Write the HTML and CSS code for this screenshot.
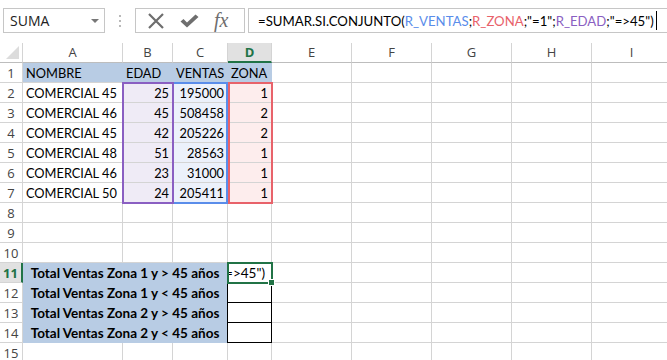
FILE: index.html
```html
<!DOCTYPE html>
<html lang="es">
<head>
    <meta charset="UTF-8">
    <title>Hoja de cálculo</title>
    <link rel="stylesheet" href="styles.css">
</head>
<body>
    <div class="formula-bar">
        <div class="name-box"><span>SUMA</span><span class="caret"></span></div>
        <div class="grip">
            <svg width="4" height="12" viewBox="0 0 4 12"><rect x="1" y="0" width="2" height="2" fill="#b9b9b9"/><rect x="1" y="5" width="2" height="2" fill="#b9b9b9"/><rect x="1" y="10" width="2" height="2" fill="#b9b9b9"/></svg>
        </div>
        <div class="fx-buttons">
            <svg class="icon-cancel" width="18" height="16" viewBox="0 0 18 16"><path d="M2 1 L16 15 M16 1 L2 15" stroke="#6e6e6e" stroke-width="2.2" fill="none"/></svg>
            <svg class="icon-enter" width="19" height="14" viewBox="0 0 19 14"><path d="M0.5 7.5 L3.5 5 L7 8.5 L15.5 0.5 L18.5 3 L7 13.5 Z" fill="#6e6e6e"/></svg>
            <span class="fx">fx</span>
        </div>
        <div class="formula-input"><span>=SUMAR.SI.CONJUNTO(<span class="ref-ventas">R_VENTAS</span>;<span class="ref-zona">R_ZONA</span>;"=1";<span class="ref-edad">R_EDAD</span>;"=&gt;45")</span><span class="cursor"></span></div>
    </div>

    <div class="sheet">
        <!-- column headers -->
        <div class="corner"><span class="tri"></span></div>
        <div class="ch">A</div>
        <div class="ch">B</div>
        <div class="ch">C</div>
        <div class="ch sel">D</div>
        <div class="ch">E</div>
        <div class="ch">F</div>
        <div class="ch">G</div>
        <div class="ch">H</div>
        <div class="ch">I</div>

        <!-- data -->
        <div class="rh">1</div>
        <div class="c hd">NOMBRE</div><div class="c hd">EDAD</div><div class="c hd">VENTAS</div><div class="c hd">ZONA</div><div class="rest"></div>

        <div class="rh">2</div>
        <div class="c">COMERCIAL 45</div><div class="c num rb">25</div><div class="c num rc">195000</div><div class="c num rd">1</div><div class="rest"></div>
        <div class="rh">3</div>
        <div class="c">COMERCIAL 46</div><div class="c num rb">45</div><div class="c num rc">508458</div><div class="c num rd">2</div><div class="rest"></div>
        <div class="rh">4</div>
        <div class="c">COMERCIAL 45</div><div class="c num rb">42</div><div class="c num rc">205226</div><div class="c num rd">2</div><div class="rest"></div>
        <div class="rh">5</div>
        <div class="c">COMERCIAL 48</div><div class="c num rb">51</div><div class="c num rc">28563</div><div class="c num rd">1</div><div class="rest"></div>
        <div class="rh">6</div>
        <div class="c">COMERCIAL 46</div><div class="c num rb">23</div><div class="c num rc">31000</div><div class="c num rd">1</div><div class="rest"></div>
        <div class="rh">7</div>
        <div class="c">COMERCIAL 50</div><div class="c num rb">24</div><div class="c num rc">205411</div><div class="c num rd">1</div><div class="rest"></div>

        <div class="rh">8</div>
        <div class="c"></div><div class="c"></div><div class="c"></div><div class="c"></div><div class="rest"></div>
        <div class="rh">9</div>
        <div class="c"></div><div class="c"></div><div class="c"></div><div class="c"></div><div class="rest"></div>
        <div class="rh">10</div>
        <div class="c"></div><div class="c"></div><div class="c"></div><div class="c"></div><div class="rest"></div>

        <!-- summary -->
        <div class="rh sel">11</div>
        <div class="c title">Total Ventas Zona 1 y &gt; 45 años</div><div class="c boxed editing"><span>;"=&gt;45")</span></div><div class="rest"></div>
        <div class="rh">12</div>
        <div class="c title">Total Ventas Zona 1 y &lt; 45 años</div><div class="c boxed"></div><div class="rest"></div>
        <div class="rh">13</div>
        <div class="c title">Total Ventas Zona 2 y &gt; 45 años</div><div class="c boxed"></div><div class="rest"></div>
        <div class="rh">14</div>
        <div class="c title">Total Ventas Zona 2 y &lt; 45 años</div><div class="c boxed"></div><div class="rest"></div>

        <div class="rh">15</div>
        <div class="c"></div><div class="c"></div><div class="c"></div><div class="c"></div><div class="rest"></div>

        <!-- range highlights of the formula being edited -->
        <div class="range range-ventas"></div>
        <div class="range range-edad"></div>
        <div class="range range-zona"></div>
        <div class="active-cell"></div>
    </div>
</body>
</html>
```

FILE: styles.css
```css
html, body {
    margin: 0;
    padding: 0;
    background-color: #FFFFFF;
    overflow: hidden;
}

body {
    width: 667px;
    height: 360px;
    font-family: Lato, "Liberation Sans", sans-serif;
    color: #000000;
}

/* ---------- formula bar ---------- */
.formula-bar {
    display: flex;
    align-items: center;
    height: 43px;
    padding: 8px 0 10px 3px;
    box-sizing: border-box;
}

.name-box {
    flex: none;
    display: flex;
    align-items: center;
    justify-content: space-between;
    width: 102px;
    height: 25px;
    box-sizing: border-box;
    border: 1px solid #c6c6c6;
    padding: 0 5px 0 6px;
    font-family: "Open Sans", "Noto Sans", sans-serif;
    font-size: 14px;
    color: #222;
}

.caret {
    width: 0;
    height: 0;
    border-left: 4px solid transparent;
    border-right: 4px solid transparent;
    border-top: 4px solid #777;
}

.grip {
    flex: none;
    display: flex;
    align-items: center;
    justify-content: center;
    width: 30px;
    height: 25px;
}

.fx-buttons {
    flex: none;
    display: flex;
    align-items: center;
    width: 110px;
    height: 25px;
    box-sizing: border-box;
    border: 1px solid #c6c6c6;
    padding-left: 11px;
}

.icon-cancel { margin-right: 15px; }
.icon-enter { margin-right: 15px; margin-top: 1px; }

.fx {
    font-family: "Liberation Serif", "DejaVu Serif", serif;
    font-style: italic;
    font-size: 20px;
    color: #6e6e6e;
    line-height: 1;
    margin-top: -2px;
}

.formula-input {
    flex: 1;
    min-width: 0;
    height: 25px;
    margin-left: 3px;
    box-sizing: border-box;
    border: 1px solid #c6c6c6;
    border-right: none;
    padding-left: 9px;
    display: flex;
    align-items: center;
    font-size: 13.2px;
    white-space: nowrap;
}

.ref-ventas { color: #5a8dea; }
.ref-zona { color: #e8626a; }
.ref-edad { color: #8a5fc2; }

.cursor {
    flex: none;
    width: 1px;
    height: 19px;
    margin-left: 2px;
    background-color: #000;
}

/* ---------- sheet grid ---------- */
.sheet {
    position: relative;
    display: grid;
    grid-template-columns: 23px 100px 50px 55px 44px repeat(5, 80px);
    grid-auto-rows: 20px;
    width: 672px;
}

.corner, .ch, .rh, .c, .rest {
    box-sizing: border-box;
    border-right: 1px solid #d4d4d4;
    border-bottom: 1px solid #d4d4d4;
}

.corner {
    display: flex;
    align-items: flex-end;
    justify-content: flex-end;
    padding: 0 3px 3px 0;
    border-bottom-color: #bdbdbd;
}

.tri {
    width: 0;
    height: 0;
    border-left: 13px solid transparent;
    border-bottom: 13px solid #dcdcdc;
}

.ch {
    text-align: center;
    font-family: "Open Sans", "Noto Sans", sans-serif;
    font-size: 13px;
    line-height: 19px;
    color: #444;
    border-bottom-color: #bdbdbd;
}

.ch.sel {
    background-color: #e1e1e1;
    color: #217346;
    font-weight: bold;
    border-bottom: 2px solid #217346;
    line-height: 18px;
}

.rh {
    text-align: center;
    font-family: "Open Sans", "Noto Sans", sans-serif;
    font-size: 13px;
    line-height: 20px;
    color: #444;
}

.rh.sel {
    background-color: #e1e1e1;
    color: #217346;
    font-weight: bold;
    border-right: 2px solid #217346;
}

.c {
    font-size: 12.8px;
    line-height: 21px;
    padding: 0 3px;
    white-space: nowrap;
    overflow: hidden;
}

.num { text-align: right; padding-right: 3px; }

.hd {
    background-color: #b8cce4;
    border-color: #b8cce4;
    border-bottom-color: #d4d4d4;
}

.rb { background-color: #efebf6; }
.rc { background-color: #ecf1fb; }
.rd { background-color: #fdeded; }

.title {
    grid-column: span 3;
    background-color: #b8cce4;
    border-color: #b8cce4;
    text-align: center;
    font-size: 13.5px;
    font-weight: bold;
}

.boxed {
    border-right: 1px solid #000;
    border-bottom: 1px solid #000;
    box-shadow: -1px 0 0 #000;
}

.editing {
    display: flex;
    justify-content: flex-end;
    padding-right: 6px;
    font-size: 13.5px;
}

.rest {
    grid-column: span 5;
    background-image: repeating-linear-gradient(to right, transparent 0 79px, #d4d4d4 79px 80px);
    border-right: none;
}

/* ---------- overlays ---------- */
.range {
    position: absolute;
    top: -1px;
    bottom: -1px;
    left: -1px;
    right: -1px;
    border: 2px solid;
}

.range-edad {
    grid-column: 3 / 4;
    grid-row: 3 / 9;
    border-color: #8a5fc2;
}

.range-ventas {
    grid-column: 4 / 5;
    grid-row: 3 / 9;
    right: 0;
    border-color: #5a8dea;
}

.range-zona {
    grid-column: 5 / 6;
    grid-row: 3 / 9;
    left: 0;
    border-color: #e8626a;
}

.active-cell {
    position: absolute;
    grid-column: 5 / 6;
    grid-row: 12 / 13;
    top: -1px;
    bottom: -1px;
    left: -1px;
    right: -1px;
    border: 2px solid #217346;
}

.active-cell::after {
    content: "";
    position: absolute;
    right: -4px;
    bottom: -4px;
    width: 5px;
    height: 5px;
    background-color: #217346;
    border: 1px solid #fff;
}
```
